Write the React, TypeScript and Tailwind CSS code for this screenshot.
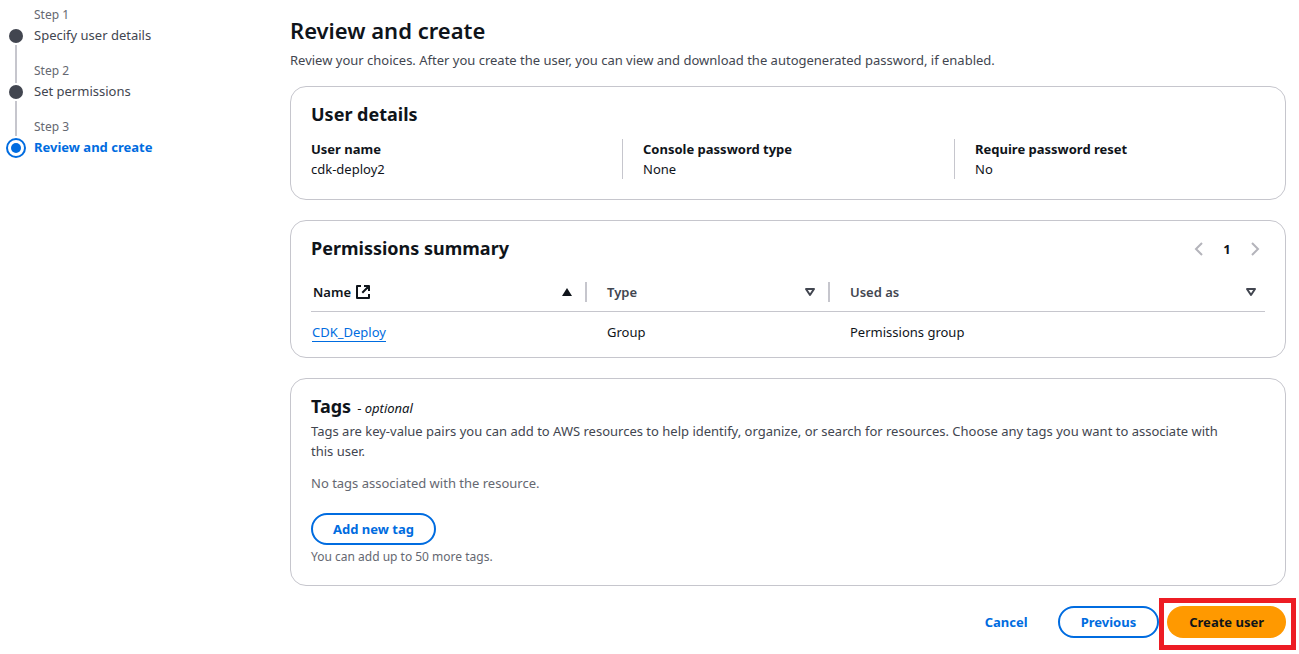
import type { ReactNode } from "react";
import clsx from "clsx";

const steps = [
  { label: "Step 1", title: "Specify user details", active: false, line: "-mb-5" },
  { label: "Step 2", title: "Set permissions", active: false, line: "-mb-[17px]" },
  { label: "Step 3", title: "Review and create", active: true, line: "" },
];

const details = [
  { label: "User name", value: "cdk-deploy2" },
  { label: "Console password type", value: "None" },
  { label: "Require password reset", value: "No" },
];

function Card({ className, children }: { className?: string; children: ReactNode }) {
  return (
    <section className={clsx("rounded-2xl border border-[#c6c6cd] px-5 pt-[15px]", className)}>
      {children}
    </section>
  );
}

function CardTitle({ children }: { children: ReactNode }) {
  return <h2 className="text-[18px] leading-6 font-bold">{children}</h2>;
}

function StepMarker({ active }: { active: boolean }) {
  return active ? (
    <svg className="size-5 shrink-0" viewBox="0 0 20 20" aria-hidden="true">
      <circle cx="10" cy="10" r="9" fill="none" stroke="#006ce0" strokeWidth="2" />
      <circle cx="10" cy="10" r="5" fill="#006ce0" />
    </svg>
  ) : (
    <svg className="size-5 shrink-0" viewBox="0 0 20 20" aria-hidden="true">
      <circle cx="10" cy="10" r="7" fill="#424650" />
    </svg>
  );
}

function Steps() {
  return (
    <nav aria-label="Steps" className="w-[290px] shrink-0 pt-[7px] pl-[6px]">
      <ol>
        {steps.map((step) => (
          <li key={step.label} className="grid grid-cols-[20px_1fr] gap-x-2">
            <span className="col-start-2 h-[18px] text-[12px] leading-4 text-[#656871]">{step.label}</span>
            <div className="col-start-1 flex flex-col items-center pt-px">
              <StepMarker active={step.active} />
              {!step.active && <div className={clsx("-mt-px w-[2px] grow bg-[#c6c6cd]", step.line)} />}
            </div>
            <span
              className={clsx(
                "h-[38px] leading-5",
                step.active ? "font-bold text-[#006ce0]" : "text-[#424650]",
              )}
              aria-current={step.active ? "step" : undefined}
            >
              {step.title}
            </span>
          </li>
        ))}
      </ol>
    </nav>
  );
}

function SortIcon({ filled }: { filled?: boolean }) {
  return filled ? (
    <svg className="size-4" viewBox="0 0 16 16" aria-hidden="true">
      <path d="M8 4 13 12H3Z" fill="#0f141a" />
    </svg>
  ) : (
    <svg className="size-4" viewBox="0 0 16 16" aria-hidden="true">
      <path d="M4 5h8l-4 6Z" fill="none" stroke="#424650" strokeWidth="2" strokeLinejoin="round" />
    </svg>
  );
}

function ExternalIcon() {
  return (
    <svg className="size-4" viewBox="0 0 16 16" fill="none" stroke="#0f141a" strokeWidth="2" aria-hidden="true">
      <path d="M14 10V14H2V2h4M9 2h5v5M14 2 7.3 8.7" strokeLinejoin="round" />
    </svg>
  );
}

function Chevron({ d }: { d: string }) {
  return (
    <svg className="size-4" viewBox="0 0 16 16" fill="none" stroke="#b4b4bb" strokeWidth="2" aria-hidden="true">
      <path d={d} />
    </svg>
  );
}

function HeaderCell({ children, sorted, last }: { children: ReactNode; sorted?: boolean; last?: boolean }) {
  return (
    <th scope="col" aria-sort={sorted ? "ascending" : undefined} className="border-b border-[#c6c6cd] p-0 pb-[9px]">
      <div
        className={clsx(
          "flex h-5 items-center justify-between",
          sorted ? "pl-[2px] text-[#0f141a]" : "pl-5 text-[#424650]",
          last ? "pr-[6px]" : "border-r-2 border-[#c6c6cd] pr-[10px]",
        )}
      >
        <span className="flex items-center gap-1 font-semibold">{children}</span>
        <button type="button" aria-label="Sort">
          <SortIcon filled={sorted} />
        </button>
      </div>
    </th>
  );
}

export default function App() {
  return (
    <div className="flex bg-white pr-[13px] font-['Noto_Sans','Open_Sans',sans-serif] text-[13px] leading-5 text-[#0f141a]">
      <Steps />
      <main className="min-w-0 grow pt-[15px] pb-4">
        <h1 className="text-[22px] leading-[30px] font-semibold">Review and create</h1>
        <p className="mt-[5px] text-[#424650]">
          Review your choices. After you create the user, you can view and download the autogenerated password, if
          enabled.
        </p>

        <div className="mt-4 flex flex-col gap-5">
          <Card className="pb-5">
            <CardTitle>User details</CardTitle>
            <dl className="-mx-[21px] mt-[13px] grid grid-cols-3">
              {details.map((item, i) => (
                <div key={item.label} className={clsx("pr-5", i === 0 ? "pl-[21px]" : "border-l border-[#c6c6cd] pl-5")}>
                  <dt className="font-bold">{item.label}</dt>
                  <dd>{item.value}</dd>
                </div>
              ))}
            </dl>
          </Card>

          <Card className="pb-[5px]">
            <div className="flex items-center justify-between">
              <CardTitle>Permissions summary</CardTitle>
              <div className="flex items-center pt-[2px] pr-[2px]">
                <button type="button" aria-label="Previous page" disabled>
                  <Chevron d="M11 2 5 8l6 6" />
                </button>
                <span className="w-10 text-center font-bold">1</span>
                <button type="button" aria-label="Next page" disabled>
                  <Chevron d="m5 2 6 6-6 6" />
                </button>
              </div>
            </div>
            <table className="mt-[22px] w-full table-fixed border-separate border-spacing-0 text-left">
              <colgroup>
                <col className="w-[276px]" />
                <col className="w-[243px]" />
                <col />
              </colgroup>
              <thead>
                <tr>
                  <HeaderCell sorted>
                    Name <ExternalIcon />
                  </HeaderCell>
                  <HeaderCell>Type</HeaderCell>
                  <HeaderCell last>Used as</HeaderCell>
                </tr>
              </thead>
              <tbody>
                <tr>
                  <td className="h-10 pl-px">
                    <a href="#cdk-deploy" className="inline-block border-b border-[#006ce0] leading-[18px] text-[#006ce0]">
                      CDK_Deploy
                    </a>
                  </td>
                  <td className="pl-5">Group</td>
                  <td className="pl-5">Permissions group</td>
                </tr>
              </tbody>
            </table>
          </Card>

          <Card className="pb-5">
            <div className="flex items-baseline gap-[6px]">
              <CardTitle>Tags</CardTitle>
              <span>
                - <i>optional</i>
              </span>
            </div>
            <p className="mt-[3px] text-[#424650]">
              Tags are key-value pairs you can add to AWS resources to help identify, organize, or search for resources.
              Choose any tags you want to associate with this&nbsp;user.
            </p>
            <p className="mt-3 text-[#656871]">No tags associated with the resource.</p>
            <button
              type="button"
              className="mt-5 block h-8 rounded-full border-2 border-[#006ce0] px-5 font-bold text-[#006ce0]"
            >
              Add new tag
            </button>
            <p className="mt-1 text-[12px] leading-4 text-[#656871]">You can add up to 50 more tags.</p>
          </Card>
        </div>

        <div className="mt-5 flex items-center justify-end gap-2">
          <button type="button" className="h-8 px-[22px] font-bold text-[#006ce0]">
            Cancel
          </button>
          <button type="button" className="h-8 rounded-full border-2 border-[#006ce0] px-[21px] font-bold text-[#006ce0]">
            Previous
          </button>
          <div className="relative">
            <button type="button" className="block h-8 rounded-full bg-[#ff9900] px-[22px] font-bold">
              Create user
            </button>
            <div className="pointer-events-none absolute -top-2 -right-[10px] -bottom-3 -left-2 border-[5px] border-[#ed1c24]" />
          </div>
        </div>
      </main>
    </div>
  );
}
